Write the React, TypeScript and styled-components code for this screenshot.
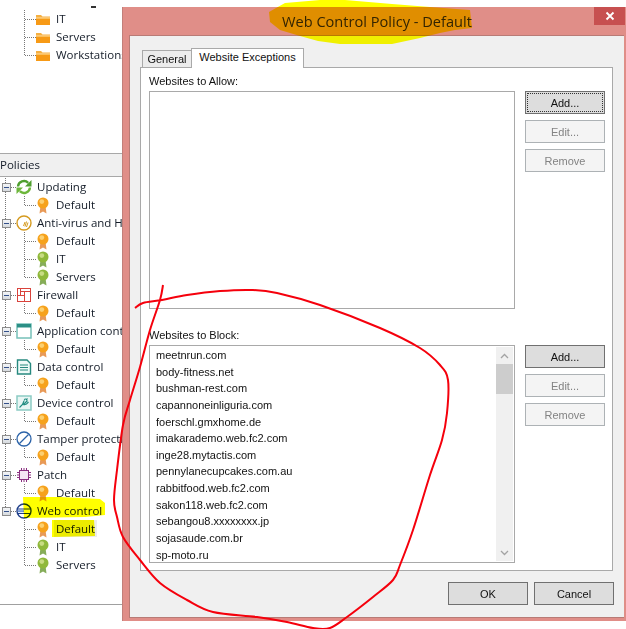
import React from 'react'
import styled, { createGlobalStyle } from 'styled-components'

const GlobalStyle = createGlobalStyle`
  html, body {
    margin: 0;
    padding: 0;
    background: #fff;
  }
  body {
    width: 626px;
    height: 629px;
    overflow: hidden;
    font-family: 'Liberation Sans', Arial, sans-serif;
  }
`

const Page = styled.div`
  position: relative;
  display: flex;
  width: 626px;
  height: 629px;
  overflow: hidden;
`

/* left tree */

const Sidebar = styled.div`
  width: 122px;
  height: 605px;
  flex: none;
  box-sizing: border-box;
  overflow: hidden;
  border-bottom: 1px solid #a0a0a0;
  font-family: 'Open Sans', sans-serif;
  font-size: 11.5px;
  color: #141c28;
`

const CutOff = styled.div`
  width: 5px;
  height: 2px;
  margin: 0 0 2px 91px;
  background: #333;
`

const TopList = styled.div`
  height: 153px;
  box-sizing: border-box;
  padding-top: 6px;
`

const PanelHeader = styled.div`
  height: 22px;
  line-height: 22px;
  background: #f0f0f0;
  border-top: 1px solid #a8a8a8;
  border-bottom: 1px solid #a8a8a8;
  margin-bottom: 1px;
`

const dottedLine = (x: number, length: string) =>
  `repeating-linear-gradient(#777 0 1px, transparent 1px 2px) ${x}px 0 / 1px ${length} no-repeat`

const Group = styled.div<{ $last?: boolean }>`
  background: ${p => dottedLine(5, p.$last ? '10px' : '100%')};
`

const RootRow = styled.div`
  display: flex;
  align-items: center;
  height: 18px;
  white-space: nowrap;
`

const RootLabel = styled.span`
  margin-bottom: 2px;
`

const Toggle = styled.span`
  width: 7px;
  height: 7px;
  margin-left: 2px;
  flex: none;
  display: flex;
  align-items: center;
  justify-content: center;
  background: linear-gradient(#f4f6f8, #d6dade);
  border: 1px solid #8c8c8c;
  &::before {
    content: '';
    width: 5px;
    height: 1px;
    background: #33508a;
  }
`

const RootDots = styled.span`
  width: 5px;
  height: 0;
  flex: none;
  border-top: 1px dotted #777;
`

const RootIcon = styled.svg`
  width: 16px;
  height: 16px;
  flex: none;
  margin-right: 5px;
`

const ChildRow = styled.div<{ $last?: boolean }>`
  display: flex;
  align-items: center;
  height: 18px;
  padding-left: 25px;
  white-space: nowrap;
  background: ${p => dottedLine(24, p.$last ? '10px' : '18px')};
`

const ElbowDots = styled.span`
  width: 11px;
  height: 0;
  flex: none;
  border-top: 1px dotted #777;
`

const LeafIcon = styled.svg`
  width: 14px;
  height: 17px;
  flex: none;
  margin-right: 5px;
`

const LeafLabel = styled.span<{ $selected?: boolean }>`
  padding: 0 2px;
  margin-left: -1px;
  line-height: 17px;
  margin-bottom: 2px;
  ${p => p.$selected && 'background: #ececec;'}
`

/* dialog */

const Window = styled.div`
  width: 504px;
  height: 614px;
  margin-top: 7px;
  flex: none;
  box-sizing: border-box;
  background: #e08e88;
  border-left: 1px solid #c27f7a;
  display: flex;
  flex-direction: column;
`

const TitleBar = styled.div`
  height: 28px;
  flex: none;
  display: flex;
  justify-content: flex-end;
`

const Title = styled.div`
  flex: 1;
  padding: 4px 0 0 159px;
  font-family: 'Open Sans', sans-serif;
  font-size: 14.6px;
  line-height: 20px;
  color: #33240c;
  white-space: nowrap;
`

const CloseButton = styled.div`
  width: 31px;
  height: 18px;
  margin-right: 1px;
  background: #c75050;
  display: flex;
  align-items: center;
  justify-content: center;
`

const Client = styled.div`
  flex: 1;
  margin: 0 2px 3px 6px;
  border-top: 1px solid #b87b76;
  border-left: 1px solid #b87b76;
  border-bottom: 1px solid #b87b76;
  background: #f0f0f0;
  padding: 12px 11px 0 10px;
  display: flex;
  flex-direction: column;
`

const TabStrip = styled.div`
  display: flex;
  align-items: flex-end;
  height: 20px;
  padding-left: 2px;
  margin-bottom: -1px;
  position: relative;
`

const Tab = styled.div<{ $active?: boolean }>`
  box-sizing: border-box;
  width: ${p => (p.$active ? '113px' : '50px')};
  text-align: center;
  font-size: 11px;
  color: #111;
  border: 1px solid #a9a9a9;
  border-bottom: ${p => (p.$active ? 'none' : '1px solid #a9a9a9')};
  background: ${p => (p.$active ? '#fff' : '#ececec')};
  height: ${p => (p.$active ? '20px' : '18px')};
  line-height: ${p => (p.$active ? '17px' : '16px')};
  margin-left: ${p => (p.$active ? '-1px' : '0')};
  position: relative;
  z-index: ${p => (p.$active ? 1 : 0)};
`

const TabPanel = styled.div`
  height: 504px;
  box-sizing: border-box;
  background: #fff;
  border: 1px solid #a9a9a9;
  padding: 6px 7px 0 8px;
`

const FieldLabel = styled.div`
  font-size: 11px;
  line-height: 15px;
  height: 17px;
  color: #111;
`

const Section = styled.div`
  display: flex;
  gap: 10px;
  margin-bottom: 19px;
`

const ListBox = styled.div`
  width: 366px;
  height: 218px;
  flex: none;
  box-sizing: border-box;
  border: 1px solid #a9a9a9;
  background: #fff;
  display: flex;
  padding: 1px;
`

const Rows = styled.div`
  flex: 1;
  padding-left: 5px;
  overflow: hidden;
`

const ListRow = styled.div`
  height: 16.65px;
  line-height: 16.65px;
  font-size: 11px;
  color: #111;
  white-space: nowrap;
`

const ScrollBar = styled.div`
  width: 17px;
  flex: none;
  background: #f0f0f0;
  display: flex;
  flex-direction: column;
`

const ScrollArrow = styled.div`
  height: 17px;
  flex: none;
  display: flex;
  align-items: center;
  justify-content: center;
`

const ScrollThumb = styled.div`
  height: 30px;
  flex: none;
  background: #cdcdcd;
`

const ScrollTrack = styled.div`
  flex: 1;
`

const ButtonColumn = styled.div`
  display: flex;
  flex-direction: column;
  gap: 6px;
`

const Button = styled.div<{ $disabled?: boolean; $focused?: boolean }>`
  width: 80px;
  height: 23px;
  box-sizing: border-box;
  display: flex;
  align-items: center;
  justify-content: center;
  font-size: 11px;
  color: ${p => (p.$disabled ? '#838383' : '#111')};
  background: ${p => (p.$disabled ? '#f4f4f4' : '#dddddd')};
  border: 1px solid ${p => (p.$disabled ? '#adb2b5' : '#707070')};
  ${p => p.$focused && 'outline: 1px dotted #333; outline-offset: -3px;'}
`

const Footer = styled.div`
  display: flex;
  justify-content: flex-end;
  gap: 6px;
  margin: 11px -1px 0 0;
`

/* hand drawn marks on top of the screenshot */

const Annotations = styled.svg`
  position: absolute;
  left: 0;
  top: 0;
  pointer-events: none;
`

const Highlights = styled.svg`
  position: absolute;
  left: 0;
  top: 0;
  pointer-events: none;
  mix-blend-mode: multiply;
`

const Folder = () => (
  <LeafIcon viewBox="0 0 14 17">
    <path d="M0 4h5l1.5 1.5H14V6H0z" fill="#f5b042" />
    <path d="M0 6.500h14V14H0z" fill="#f79a16" />
    <path d="M0 6.500h14V8H0z" fill="#fbc05e" />
  </LeafIcon>
)

const Medal = ({ green }: { green?: boolean }) => {
  const main = green ? '#8fb83a' : '#f6a21c'
  const light = green ? '#c8dc82' : '#fcd070'
  const ribbon = green ? '#86ad5a' : '#e89a58'
  return (
    <LeafIcon viewBox="0 0 14 17">
      <path d="M4.500 9L3.500 16.500L7 14.500L10.500 16.500L9.500 9z" fill={ribbon} />
      <circle cx="7" cy="6" r="5.500" fill={main} />
      <circle cx="5.800" cy="4.600" r="2.400" fill={light} />
    </LeafIcon>
  )
}

const icons: Record<string, React.ReactNode> = {
  updating: (
    <>
      <path d="M2 7.500A6 6 0 0 1 12.200 3.800" fill="none" stroke="#4f9f2f" strokeWidth="2.400" />
      <path d="M15.500 1v6.500H9z" fill="#4f9f2f" />
      <path d="M14 8.500A6 6 0 0 1 3.800 12.200" fill="none" stroke="#6cb63a" strokeWidth="2.400" />
      <path d="M0.500 15V8.500H7z" fill="#6cb63a" />
    </>
  ),
  antivirus: (
    <>
      <circle cx="8" cy="8" r="7" fill="none" stroke="#d59a1e" strokeWidth="1.400" />
      <path d="M7.500 11L9 7M9 11.500L10.500 6.500M10.500 12L12 7.500" fill="none" stroke="#d59a1e" strokeWidth="1" />
    </>
  ),
  firewall: (
    <path
      d="M1.500 1.500h13v13h-13zM4.500 1.500v7M4.500 4.500h10M1.500 8.500h7M8.500 4.500v10"
      fill="none"
      stroke="#d9433c"
      strokeWidth="1"
      shapeRendering="crispEdges"
    />
  ),
  application: (
    <>
      <rect x="1" y="1" width="14" height="14" fill="#fff" stroke="#76c0b8" strokeWidth="1.500" />
      <rect x="1" y="1" width="14" height="3.500" fill="#2b8f86" />
    </>
  ),
  data: (
    <>
      <path d="M1.500 1h9.500l3.500 3.500V15h-13z" fill="#eefaf8" stroke="#27897f" strokeWidth="1.400" />
      <path d="M4 6h8M4 8.500h8M4 11h8" stroke="#27897f" strokeWidth="1.200" />
    </>
  ),
  device: (
    <>
      <rect x="1" y="1" width="14" height="14" fill="#e8f6f4" stroke="#8ccbc4" strokeWidth="1.500" />
      <path
        d="M3.500 12.500l3-3 1.500-3.500M6.500 9.500l2-1 3-3M7.500 10l3-1 2-2M8 5.500l1.500-2M10 5l1.500-1.500"
        stroke="#1f8b80"
        strokeWidth="1.200"
        fill="none"
      />
    </>
  ),
  tamper: (
    <>
      <circle cx="8" cy="8" r="7" fill="none" stroke="#2a62a8" strokeWidth="1.300" />
      <path d="M3.500 12.500l9-9" stroke="#2a62a8" strokeWidth="1.300" />
    </>
  ),
  patch: (
    <>
      <rect x="3.500" y="3.500" width="9" height="9" fill="#f6e6f4" stroke="#8a2f80" strokeWidth="1" />
      <path
        d="M5.500 1v2M8 1v2M10.500 1v2M5.500 13v2M8 13v2M10.500 13v2M1 5.500h2M1 8h2M1 10.500h2M13 5.500h2M13 8h2M13 10.500h2"
        stroke="#8a2f80"
        strokeWidth="1"
      />
    </>
  ),
  web: (
    <>
      <circle cx="8" cy="8" r="7" fill="none" stroke="#1f3f8a" strokeWidth="1.400" />
      <path d="M1.500 6h13M1.500 10.500h13" stroke="#1f3f8a" strokeWidth="1" />
      <path d="M2 8.200h6" stroke="#6f95d8" strokeWidth="2" />
    </>
  ),
}

type Policy = {
  icon: string
  label: string
  children: { label: string; green?: boolean; selected?: boolean }[]
}

const policies: Policy[] = [
  { icon: 'updating', label: 'Updating', children: [{ label: 'Default' }] },
  {
    icon: 'antivirus',
    label: 'Anti-virus and HIPS',
    children: [{ label: 'Default' }, { label: 'IT', green: true }, { label: 'Servers', green: true }],
  },
  { icon: 'firewall', label: 'Firewall', children: [{ label: 'Default' }] },
  { icon: 'application', label: 'Application control', children: [{ label: 'Default' }] },
  { icon: 'data', label: 'Data control', children: [{ label: 'Default' }] },
  { icon: 'device', label: 'Device control', children: [{ label: 'Default' }] },
  { icon: 'tamper', label: 'Tamper protection', children: [{ label: 'Default' }] },
  { icon: 'patch', label: 'Patch', children: [{ label: 'Default' }] },
  {
    icon: 'web',
    label: 'Web control',
    children: [{ label: 'Default', selected: true }, { label: 'IT', green: true }, { label: 'Servers', green: true }],
  },
]

const blocked = [
  'meetnrun.com',
  'body-fitness.net',
  'bushman-rest.com',
  'capannoneinliguria.com',
  'foerschl.gmxhome.de',
  'imakarademo.web.fc2.com',
  'inge28.mytactis.com',
  'pennylanecupcakes.com.au',
  'rabbitfood.web.fc2.com',
  'sakon118.web.fc2.com',
  'sebangou8.xxxxxxxx.jp',
  'sojasaude.com.br',
  'sp-moto.ru',
]

// the red circle, traced from the screenshot
const scribble = [
  [163, 285], [160, 300], [150, 330], [140, 367], [130, 400], [123, 425], [117, 470], [114, 500],
  [117, 517], [123, 537], [140, 560], [160, 583], [187, 600], [213, 612], [257, 617], [287, 622],
  [313, 628], [330, 628], [347, 617], [373, 597], [393, 580], [400, 565], [413, 530], [430, 475],
  [442, 440], [447, 413], [448, 380], [440, 365], [420, 348], [380, 328], [320, 305], [277, 293],
  [253, 290], [220, 291], [187, 295], [162, 300], [143, 303], [135, 308],
]

function smoothPath(points: number[][]) {
  let d = `M${points[0][0]} ${points[0][1]}`
  for (let i = 0; i < points.length - 1; i++) {
    const p0 = points[Math.max(i - 1, 0)]
    const p1 = points[i]
    const p2 = points[i + 1]
    const p3 = points[Math.min(i + 2, points.length - 1)]
    const c1x = p1[0] + (p2[0] - p0[0]) / 6
    const c1y = p1[1] + (p2[1] - p0[1]) / 6
    const c2x = p2[0] - (p3[0] - p1[0]) / 6
    const c2y = p2[1] - (p3[1] - p1[1]) / 6
    d += `C${c1x} ${c1y} ${c2x} ${c2y} ${p2[0]} ${p2[1]}`
  }
  return d
}

const Chevron = ({ down }: { down?: boolean }) => (
  <svg width="9" height="6" viewBox="0 0 9 6">
    <path d={down ? 'M1 1l3.500 3.500L8 1' : 'M1 5l3.500-3.500L8 5'} fill="none" stroke="#a3a3a3" strokeWidth="1.300" />
  </svg>
)

function App() {
  return (
    <Page>
      <GlobalStyle />
      <Sidebar>
        <TopList>
          <CutOff />
          {['IT', 'Servers', 'Workstations'].map((name, i) => (
            <ChildRow key={name} $last={i === 2}>
              <ElbowDots />
              <Folder />
              <LeafLabel>{name}</LeafLabel>
            </ChildRow>
          ))}
        </TopList>
        <PanelHeader>Policies</PanelHeader>
        {policies.map((policy, i) => (
          <Group key={policy.label} $last={i === policies.length - 1}>
            <RootRow>
              <Toggle />
              <RootDots />
              <RootIcon viewBox="0 0 16 16">{icons[policy.icon]}</RootIcon>
              <RootLabel>{policy.label}</RootLabel>
            </RootRow>
            {policy.children.map((child, j) => (
              <ChildRow key={child.label} $last={j === policy.children.length - 1}>
                <ElbowDots />
                <Medal green={child.green} />
                <LeafLabel $selected={child.selected}>{child.label}</LeafLabel>
              </ChildRow>
            ))}
          </Group>
        ))}
      </Sidebar>

      <Window>
        <TitleBar>
          <Title>Web Control Policy - Default</Title>
          <CloseButton>
            <svg width="10" height="10" viewBox="0 0 10 10">
              <path d="M1.500 1.500l7 7M8.500 1.500l-7 7" stroke="#fff" strokeWidth="1.800" />
            </svg>
          </CloseButton>
        </TitleBar>
        <Client>
          <TabStrip>
            <Tab>General</Tab>
            <Tab $active>Website Exceptions</Tab>
          </TabStrip>
          <TabPanel>
            <FieldLabel>Websites to Allow:</FieldLabel>
            <Section>
              <ListBox />
              <ButtonColumn>
                <Button $focused>Add...</Button>
                <Button $disabled>Edit...</Button>
                <Button $disabled>Remove</Button>
              </ButtonColumn>
            </Section>
            <FieldLabel>Websites to Block:</FieldLabel>
            <Section>
              <ListBox>
                <Rows>
                  {blocked.map(site => (
                    <ListRow key={site}>{site}</ListRow>
                  ))}
                </Rows>
                <ScrollBar>
                  <ScrollArrow>
                    <Chevron />
                  </ScrollArrow>
                  <ScrollThumb />
                  <ScrollTrack />
                  <ScrollArrow>
                    <Chevron down />
                  </ScrollArrow>
                </ScrollBar>
              </ListBox>
              <ButtonColumn>
                <Button>Add...</Button>
                <Button $disabled>Edit...</Button>
                <Button $disabled>Remove</Button>
              </ButtonColumn>
            </Section>
          </TabPanel>
          <Footer>
            <Button>OK</Button>
            <Button>Cancel</Button>
          </Footer>
        </Client>
      </Window>

      <Highlights width="626" height="629" viewBox="0 0 626 629">
        <path
          d="M269 12L276 8L285 3L320 0L345 0L392 4L430 7L470 10L472 28L455 30L440 33L420 38L392 44L340 44L318 41L300 36L280 30L270 22Z"
          fill="#ffff00"
        />
        <path d="M23 497L60 497L100 499L105 503L105 515L85 517L24 518Z" fill="#ffff00" />
        <path d="M52 520L94 520L95 536L52 537Z" fill="#ffff00" />
      </Highlights>

      <Annotations width="626" height="629" viewBox="0 0 626 629">
        <path d={smoothPath(scribble)} fill="none" stroke="#f5000c" strokeWidth="2" />
      </Annotations>
    </Page>
  )
}

export default App
